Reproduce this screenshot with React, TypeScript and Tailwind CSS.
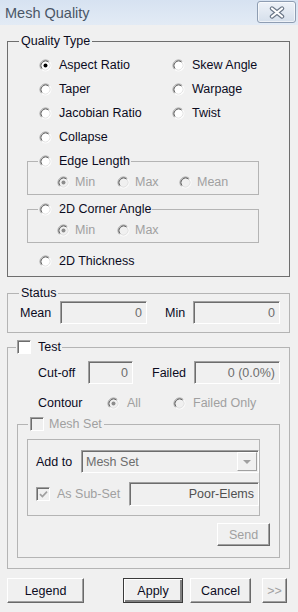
import React from 'react';

const DIS = 'text-[#a0a0a0]';

function Radio({ checked = false, disabled = false }: { checked?: boolean; disabled?: boolean }) {
  return (
    <svg width="13" height="13" viewBox="0 0 13 13" className="shrink-0">
      <circle cx="6.5" cy="6.5" r="5.5" fill={disabled ? '#f0f0f0' : '#ffffff'} />
      <path d="M10.39 2.61A5.5 5.5 0 0 0 2.61 10.39" fill="none" stroke="#9a9a9a" />
      <path d="M2.61 10.39A5.5 5.5 0 0 0 10.39 2.61" fill="none" stroke="#ffffff" />
      <path d="M9.68 3.32A4.5 4.5 0 0 0 3.32 9.68" fill="none" stroke="#5a5a5a" />
      <path d="M3.32 9.68A4.5 4.5 0 0 0 9.68 3.32" fill="none" stroke="#e2e2e2" />
      {checked && <circle cx="6.5" cy="6.5" r="2" fill={disabled ? '#8c8c8c' : '#000000'} />}
    </svg>
  );
}

function Check({ checked = false, disabled = false }: { checked?: boolean; disabled?: boolean }) {
  return (
    <span
      className={`w-[14px] h-[14px] shrink-0 flex items-center justify-center border border-t-[#a0a0a0] border-l-[#a0a0a0] border-r-white border-b-white shadow-[inset_1px_1px_0_#6d6d6d] ${
        disabled ? 'bg-[#f0f0f0]' : 'bg-white'
      }`}
    >
      {checked && (
        <svg width="9" height="9" viewBox="0 0 9 9">
          <path d="M1 4.2l2.4 2.4L8 1.6" fill="none" stroke={disabled ? '#a0a0a0' : '#000'} strokeWidth="1.7" />
        </svg>
      )}
    </span>
  );
}

function Field({ className = '', children }: { className?: string; children?: React.ReactNode }) {
  return (
    <div
      className={`h-[23px] flex items-center justify-end pr-[4px] bg-[#f0f0f0] border border-t-[#a0a0a0] border-l-[#a0a0a0] border-r-white border-b-white shadow-[inset_1px_1px_0_#6d6d6d] text-[#6d6d6d] ${className}`}
    >
      {children}
    </div>
  );
}

function Btn({
  className = '',
  children,
  disabled = false,
  primary = false,
}: {
  className?: string;
  children: React.ReactNode;
  disabled?: boolean;
  primary?: boolean;
}) {
  const frame = primary
    ? 'border border-[#3a3a3a] shadow-[inset_1px_1px_0_#ffffff,inset_-2px_-2px_0_#808080]'
    : 'border border-t-white border-l-white border-r-[#696969] border-b-[#696969] shadow-[inset_-1px_-1px_0_#a0a0a0]';
  return (
    <button
      type="button"
      className={`flex items-center justify-center bg-[#f0f0f0] ${frame} ${disabled ? DIS : 'text-[#0b0b1e]'} ${className}`}
    >
      {children}
    </button>
  );
}

function Opt({ label, checked, disabled, className = '', gap = 'gap-[7px]' }: { label: string; checked?: boolean; disabled?: boolean; className?: string; gap?: string }) {
  return (
    <div className={`flex items-center ${gap} ${className}`}>
      <Radio checked={checked} disabled={disabled} />
      <span className={disabled ? DIS : ''}>{label}</span>
    </div>
  );
}

function SubGroup({ label, items }: { label: string; items: string[] }) {
  const widths = ['w-[60px]', 'w-[62px]', 'w-[60px]'];
  return (
    <div className="relative ml-[19px] w-[232px] h-[34px] border border-[#b4b4b4]">
      <div className="absolute -top-[9px] left-[10px] h-[16px] px-[1px] flex items-center gap-[7px] bg-[#f0f0f0]">
        <Radio />
        <span>{label}</span>
      </div>
      <div className="pt-[10px] pl-[29px] flex">
        {items.map((it, i) => (
          <Opt key={it} label={it} checked={i === 0} disabled gap="gap-[5px]" className={`h-[20px] ${widths[i]}`} />
        ))}
      </div>
    </div>
  );
}

export default function App() {
  return (
    <div className="w-[298px] h-[612px] overflow-hidden bg-[#f0f0f0] font-['Liberation_Sans',Arial,sans-serif] text-[12.5px] leading-[16px] text-[#0b0b1e]">
      {/* title bar */}
      <div className="h-[25px] flex items-start bg-gradient-to-b from-[#d6e2f1] to-[#e3ebf5]">
        <span className="pl-[5px] pt-[4px] text-[14.5px] leading-[18px] text-[#4a5666]">Mesh Quality</span>
        <button
          type="button"
          className="ml-auto mr-[2px] mt-[1px] w-[39px] h-[22px] flex items-center justify-center rounded-[3px] border border-[#8e9db2] bg-gradient-to-b from-[#eef2f8] to-[#d5dfeb] shadow-[inset_0_0_0_1px_rgba(255,255,255,0.6)]"
        >
          <svg width="16" height="13" viewBox="0 0 16 13">
            <path d="M3 2.5l10 8M13 2.5l-10 8" stroke="#6a7687" strokeWidth="4.4" strokeLinecap="round" />
            <path d="M3 2.5l10 8M13 2.5l-10 8" stroke="#ffffff" strokeWidth="2.2" strokeLinecap="round" />
          </svg>
        </button>
      </div>

      <div className="pl-[7px] pr-[8px]">
        {/* Quality Type */}
        <div className="relative mt-[16px] border border-[#6e6e6e] pt-[11px] pb-[3px]">
          <span className="absolute -top-[9px] left-[11px] px-[2px] h-[16px] bg-[#f0f0f0]">Quality Type</span>
          <div className="grid grid-cols-[133px_1fr] pl-[31px]">
            <Opt label="Aspect Ratio" checked className="h-[24px]" />
            <Opt label="Skew Angle" className="h-[24px]" />
            <Opt label="Taper" className="h-[24px]" />
            <Opt label="Warpage" className="h-[24px]" />
            <Opt label="Jacobian Ratio" className="h-[24px]" />
            <Opt label="Twist" className="h-[24px]" />
            <Opt label="Collapse" className="h-[24px]" />
          </div>
          <div className="mt-[12px]">
            <SubGroup label="Edge Length" items={['Min', 'Max', 'Mean']} />
          </div>
          <div className="mt-[14px]">
            <SubGroup label="2D Corner Angle" items={['Min', 'Max']} />
          </div>
          <div className="mt-[6px] pl-[31px]">
            <Opt label="2D Thickness" className="h-[24px]" />
          </div>
        </div>

        {/* Status */}
        <div className="relative mt-[16px] h-[40px] border border-[#b4b4b4]">
          <span className="absolute -top-[9px] left-[11px] px-[2px] h-[16px] bg-[#f0f0f0]">Status</span>
          <div className="pt-[7px] pl-[12px] flex items-center">
            <span className="w-[40px]">Mean</span>
            <Field className="w-[87px]">0</Field>
            <span className="ml-[18px] w-[28px]">Min</span>
            <Field className="w-[87px]">0</Field>
          </div>
        </div>

        {/* Test */}
        <div className="relative mt-[14px] h-[222px] border border-[#b4b4b4] pt-[13px]">
          <div className="absolute -top-[9px] left-[8px] px-[1px] h-[16px] flex items-center gap-[7px] bg-[#f0f0f0]">
            <Check />
            <span>Test</span>
          </div>
          <div className="pl-[30px] flex items-center">
            <span className="w-[50px]">Cut-off</span>
            <Field className="w-[45px]">0</Field>
            <span className="ml-[19px] w-[42px]">Failed</span>
            <Field className="w-[86px]">0 (0.0%)</Field>
          </div>
          <div className="mt-[9px] h-[20px] pl-[30px] flex items-center">
            <span className="w-[69px]">Contour</span>
            <Opt label="All" checked disabled className="w-[66px]" />
            <Opt label="Failed Only" disabled />
          </div>

          {/* Mesh Set */}
          <div className="relative mt-[11px] ml-[9px] w-[263px] h-[134px] border border-[#b4b4b4] pt-[14px]">
            <div className="absolute -top-[9px] left-[10px] px-[2px] h-[16px] flex items-center gap-[5px] bg-[#f0f0f0]">
              <Check disabled />
              <span className={DIS}>Mesh Set</span>
            </div>
            <div className="ml-[9px] w-[233px] h-[77px] border border-[#b4b4b4] pt-[10px] pl-[8px]">
              <div className="flex items-center">
                <span className="w-[45px]">Add to</span>
                <div className="w-[178px] h-[23px] flex items-center pl-[4px] bg-[#f0f0f0] border border-t-[#a0a0a0] border-l-[#a0a0a0] border-r-white border-b-white shadow-[inset_1px_1px_0_#6d6d6d] text-[#6d6d6d]">
                  <span>Mesh Set</span>
                  <div className="ml-auto mr-[1px] w-[20px] h-[19px] flex items-center justify-center border border-t-white border-l-white border-r-[#a0a0a0] border-b-[#a0a0a0]">
                    <svg width="8" height="4" viewBox="0 0 8 4">
                      <path d="M0 0h8L4 4z" fill="#a0a0a0" />
                    </svg>
                  </div>
                </div>
              </div>
              <div className="mt-[9px] flex items-center">
                <div className="w-[93px] flex items-center gap-[7px]">
                  <Check checked disabled />
                  <span className={DIS}>As Sub-Set</span>
                </div>
                <Field className="w-[130px] h-[24px] pr-[3px] text-[#505050]">Poor-Elems</Field>
              </div>
            </div>
            <div className="mt-[7px] pr-[9px] flex justify-end">
              <Btn disabled className="w-[53px] h-[23px]">
                Send
              </Btn>
            </div>
          </div>
        </div>

        {/* footer buttons */}
        <div className="mt-[9px] flex">
          <Btn className="w-[77px] h-[25px]">Legend</Btn>
          <Btn primary className="ml-[39px] w-[60px] h-[25px]">
            Apply
          </Btn>
          <Btn className="ml-[7px] w-[61px] h-[25px]">Cancel</Btn>
          <Btn disabled className="ml-[11px] w-[25px] h-[25px]">
            &gt;&gt;
          </Btn>
        </div>
      </div>
    </div>
  );
}
